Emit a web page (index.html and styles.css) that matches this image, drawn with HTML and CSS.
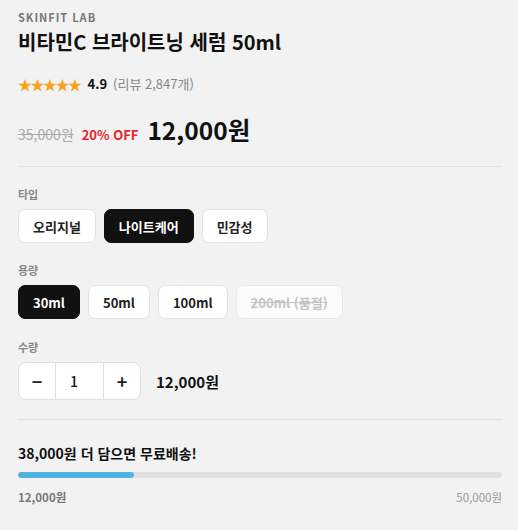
FILE: index.html
```html
<!DOCTYPE html>
<html lang="ko">
<head>
  <meta charset="UTF-8" />
  <title>비타민C 브라이트닝 세럼</title>
  <link rel="stylesheet" href="styles.css">
</head>
<body>
  <div class="brand">SKINFIT LAB</div>
  <h1 class="title">비타민C 브라이트닝 세럼 50ml</h1>
  <div class="rating">
    <span class="stars">★★★★★</span>
    <span class="score">4.9</span>
    <span class="count">(리뷰 2,847개)</span>
  </div>
  <div class="price">
    <span class="old">35,000원</span>
    <span class="off">20% OFF</span>
    <span class="now">12,000원</span>
  </div>
  <hr class="line">
  <div class="label">타입</div>
  <div class="opts">
    <button class="opt">오리지널</button>
    <button class="opt on">나이트케어</button>
    <button class="opt">민감성</button>
  </div>
  <div class="label">용량</div>
  <div class="opts">
    <button class="opt on">30ml</button>
    <button class="opt">50ml</button>
    <button class="opt">100ml</button>
    <button class="opt sold" disabled>200ml (품절)</button>
  </div>
  <div class="label qty-label">수량</div>
  <div class="qty-row">
    <div class="stepper">
      <button class="step">−</button>
      <span class="num">1</span>
      <button class="step">+</button>
    </div>
    <span class="total">12,000원</span>
  </div>
  <hr class="line">
  <div class="ship">38,000원 더 담으면 무료배송!</div>
  <div class="bar"><div class="fill" style="width: 24%"></div></div>
  <div class="bar-labels">
    <span class="cur">12,000원</span>
    <span class="goal">50,000원</span>
  </div>
</body>
</html>
```

FILE: styles.css
```css
body { background: #f2f2f2; margin: 0; padding: 10px 16px 0 18px; font-family: "Noto Sans CJK KR", "Noto Sans", sans-serif; color: #111; }
.brand { font-size: 11px; font-weight: 700; letter-spacing: 1px; color: #777; line-height: 14px; }
.title { font-size: 20px; font-weight: 700; margin: 3px 0 0; line-height: 30px; }
.rating { display: flex; align-items: center; gap: 6px; margin-top: 18px; font-size: 13px; line-height: 18px; }
.stars { color: #f7a21b; font-size: 14px; letter-spacing: -1.5px; margin-right: 1px; }
.score { font-weight: 700; }
.count { color: #888; }
.price { display: flex; align-items: baseline; gap: 8px; margin-top: 19px; line-height: 36px; }
.old { font-size: 14px; color: #aaa; text-decoration: line-through; }
.off { font-size: 13px; font-weight: 700; color: #e5262b; }
.now { font-size: 24.5px; font-weight: 700; margin-left: 1px; }
.line { border: none; border-top: 1px solid #e0e0e0; margin: 13px 0 0; }
.label { font-size: 11px; font-weight: 700; color: #888; margin-top: 20px; line-height: 14px; }
.qty-label { margin-top: 21px; }
.opts { display: flex; gap: 8px; margin-top: 8px; }
.opt { font-family: inherit; font-size: 13px; font-weight: 700; color: #222; background: #fff; border: 1px solid #e2e2e2; border-radius: 7px; height: 34px; padding: 0 14px; cursor: pointer; }
.opt.on { background: #111; border-color: #111; color: #fff; }
.opt.sold { color: #c4c4c4; text-decoration: line-through; background: #fbfbfb; border-color: #e8e8e8; cursor: default; }
.qty-row { display: flex; align-items: center; gap: 15px; margin-top: 8px; }
.stepper { display: flex; background: #fff; border: 1px solid #e0e0e0; border-radius: 8px; height: 36px; }
.step { width: 36px; border: none; background: none; font-family: inherit; font-size: 18px; font-weight: 700; color: #222; cursor: pointer; padding: 0; }
.num { width: 49px; box-sizing: border-box; padding-left: 14px; border-left: 1px solid #e0e0e0; border-right: 1px solid #e0e0e0; display: flex; align-items: center; font-size: 14px; font-weight: 500; }
.total { font-size: 15px; font-weight: 700; }
.qty-row + .line { margin-top: 19px; }
.ship { font-size: 14px; font-weight: 700; margin-top: 23px; line-height: 20px; }
.bar { height: 6px; background: #e0e0e0; border-radius: 3px; margin-top: 9px; overflow: hidden; }
.fill { height: 100%; background: #4fb3e3; border-radius: 3px; }
.bar-labels { display: flex; justify-content: space-between; margin-top: 11px; font-size: 11.5px; line-height: 16px; }
.cur { color: #777; font-weight: 700; }
.goal { color: #999; }
```
